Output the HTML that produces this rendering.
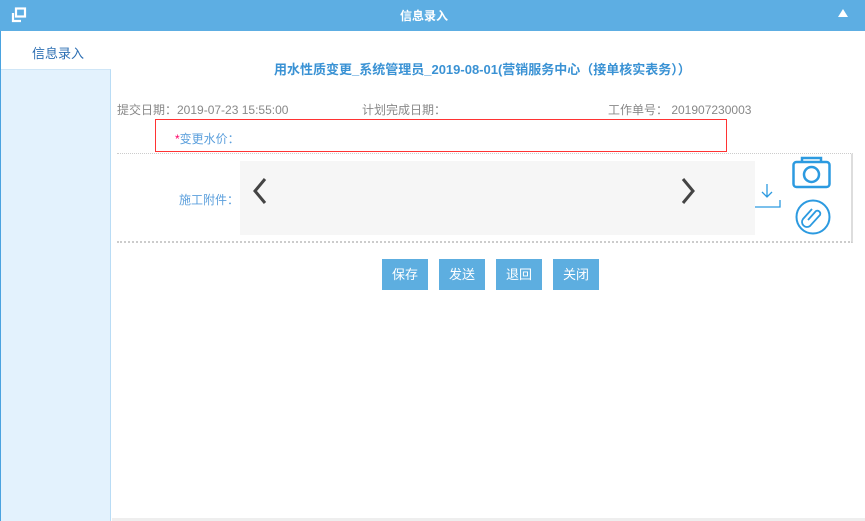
<!DOCTYPE html>
<html><head><meta charset="utf-8"><style>
*{margin:0;padding:0;box-sizing:border-box}
body{width:865px;height:521px;position:relative;overflow:hidden;background:#fff;font-family:"Liberation Sans","Noto Sans CJK SC",sans-serif;font-size:12px}
.a{position:absolute}
.btn{position:absolute;top:259px;width:46px;height:31px;background:#5daee0;color:#fff;font-size:13px;text-align:center;line-height:31px}
</style></head><body>
<div class="a" style="left:0;top:0;width:865px;height:31px;background:#5daee3"></div>
<svg class="a" style="left:11px;top:7px" width="16" height="16" viewBox="0 0 16 16"><rect x="5" y="1.5" width="9" height="8" fill="none" stroke="#fff" stroke-width="2.2"/><path d="M2 6v8h8" fill="none" stroke="#fff" stroke-width="2.2"/></svg>
<div class="a" style="left:400px;top:7px;color:#fff;font-weight:bold;font-size:12px">信息录入</div>
<div class="a" style="left:838px;top:9px;width:0;height:0;border-left:5px solid transparent;border-right:5px solid transparent;border-bottom:8px solid #fff"></div>
<div class="a" style="left:0;top:31px;width:1px;height:490px;background:#4aa3e0"></div>
<div class="a" style="left:1px;top:69px;width:110px;height:452px;background:#e3f2fd;border-top:1px solid #cfe6f7;border-right:1px solid #b9dcf5"></div>
<div class="a" style="left:32px;top:43px;color:#2d6fb3;font-size:13px">信息录入</div>
<div class="a" style="left:112px;top:518px;width:753px;height:3px;background:#eee"></div>
<div class="a" style="left:274px;top:59px;color:#3a92d4;font-weight:bold;font-size:13px">用水性质变更_系统管理员_2019-08-01(营销服务中心（接单核实表务））</div>
<div class="a" style="left:117px;top:101px;color:#888">提交日期：2019-07-23 15:55:00</div>
<div class="a" style="left:362px;top:101px;color:#888">计划完成日期：</div>
<div class="a" style="left:608px;top:101px;color:#888">工作单号：&nbsp;201907230003</div>
<div class="a" style="left:155px;top:119px;width:572px;height:33px;border:1px solid #f33"></div>
<div class="a" style="left:175px;top:130px;color:#5b9fdc"><span style="color:#f06">*</span>变更水价：</div>
<div class="a" style="left:117px;top:153px;width:736px;height:90px;border-top:1px dotted #ccc;border-bottom:2px dotted #ccc;border-right:2px solid #ddd"></div>
<div class="a" style="left:179px;top:191px;color:#5b9fdc">施工附件：</div>
<div class="a" style="left:240px;top:161px;width:515px;height:74px;background:#f6f6f6"></div>
<svg class="a" style="left:252px;top:177px" width="16" height="28"><path d="M13 2L3 14l10 12" fill="none" stroke="#444" stroke-width="3"/></svg>
<svg class="a" style="left:680px;top:177px" width="16" height="28"><path d="M3 2l10 12L3 26" fill="none" stroke="#444" stroke-width="3"/></svg>
<svg class="a" style="left:755px;top:182px" width="28" height="28"><path d="M12 2v12M7 10l5 5 5-5M0 25h25v-7" fill="none" stroke="#2c9ae0" stroke-width="1.3"/></svg>
<svg class="a" style="left:792px;top:156px" width="40" height="34"><rect x="1.5" y="6" width="36" height="25" rx="3" fill="none" stroke="#2c9ae0" stroke-width="2.5"/><path d="M10 6V2h19v4" fill="none" stroke="#2c9ae0" stroke-width="2.5"/><circle cx="19.5" cy="18.5" r="7.5" fill="none" stroke="#2c9ae0" stroke-width="2.5"/></svg>
<svg class="a" style="left:795px;top:199px" width="37" height="37"><circle cx="18" cy="18" r="16.5" fill="none" stroke="#2c9ae0" stroke-width="2"/><path d="M13 21l8-9a3 3 0 0 1 4 4l-10 11a5 5 0 0 1-7-7l9-10" fill="none" stroke="#2c9ae0" stroke-width="1.8"/></svg>
<div class="btn" style="left:382px">保存</div>
<div class="btn" style="left:439px">发送</div>
<div class="btn" style="left:496px">退回</div>
<div class="btn" style="left:553px">关闭</div>
</body></html>
